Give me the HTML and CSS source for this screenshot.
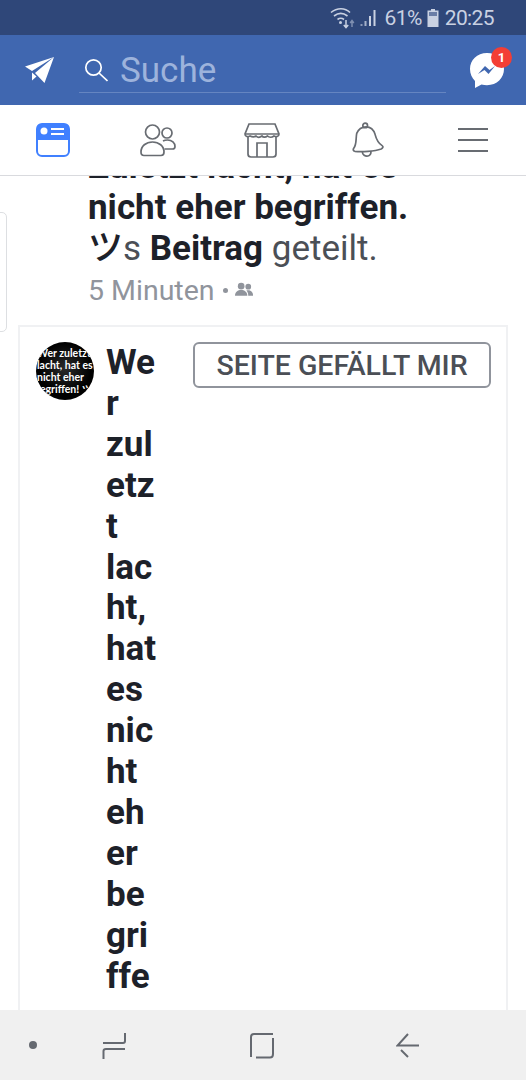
FILE: index.html
```html
<!DOCTYPE html>
<html lang="de">
<head>
<meta charset="utf-8">
<title>Facebook</title>
<link rel="stylesheet" href="styles.css">
</head>
<body>
<div class="phone">
  <div class="status">
    <svg class="st-wifi" width="26" height="24" viewBox="0 0 26 24" fill="none" stroke="#c9d1e2">
      <path d="M1 6.5C7 1.5 15 1.5 20 6.5" stroke-width="1.6"/>
      <path d="M4 10C8.5 6.5 13 6.5 17.5 10" stroke-width="1.6"/>
      <path d="M7.5 13.5C9.5 12 12 12 14 13.5" stroke-width="1.6"/>
      <circle cx="10.5" cy="16.5" r="1.5" fill="#c9d1e2" stroke="none"/>
      <path d="M16 14V21M13.8 19L16 21.5L18.2 19" stroke-width="1.5"/>
      <path d="M22 21V15M20.2 17L22 14.5L23.8 17" stroke="#7f8fb0" stroke-width="1.5"/>
    </svg>
    <svg class="st-signal" width="17" height="18" viewBox="0 0 16 18" fill="#c9d1e2">
      <rect x="0" y="15" width="2" height="2" fill="#8c9ab8"/><rect x="4" y="12" width="2" height="5" fill="#a5b1ca"/><rect x="8.5" y="7" width="2" height="10"/><rect x="13" y="1" width="2" height="16"/>
    </svg>
    <span class="st-pct">61%</span>
    <svg class="st-batt" width="12" height="18" viewBox="0 0 12 18"><path d="M4 0H8V1.5H11.5V18H.5V1.5H4Z" fill="#c9d1e2"/><rect x="2" y="3" width="8" height="4" fill="#6a7da6"/></svg>
    <span class="st-time">20:25</span>
  </div>

  <header class="topbar">
    <svg class="plane" width="30" height="26" viewBox="0 0 30 26" fill="#fff">
      <path d="M30 0L1 9.5L8 14L30 0ZM30 0L11 16L20.5 26L30 0ZM8 15.5V23.5L12.5 19.5L8 15.5Z"/>
    </svg>
    <div class="search">
      <svg class="search-icon" width="24" height="24" viewBox="0 0 24 24" fill="none" stroke="#fff" stroke-width="1.7"><circle cx="9.5" cy="9.5" r="7.7"/><path d="M15 15L23.5 23"/></svg>
      <span class="search-text">Suche</span>
    </div>
    <div class="msg">
      <svg width="36" height="38" viewBox="0 0 36 38"><path d="M18 2C8 2 1 9 1 18C1 23 3 27 6 30V37L12.5 33.5C14.5 34 16 34.2 18 34.2C28 34.2 35 27 35 18C35 9 28 2 18 2Z" fill="#fff"/><path d="M9 23L16 15L20.5 19L26 15L19.5 23L15.5 19Z" fill="#4067b0"/></svg>
      <span class="badge">1</span>
    </div>
  </header>

  <nav class="tabs">
    <div class="tab">
      <svg width="34" height="34" viewBox="0 0 34 34"><rect x="1" y="1" width="32" height="32" rx="5" fill="#fff" stroke="#4080ff" stroke-width="2"/><path d="M5 1H29A4 4 0 0 1 33 5V17H1V5A4 4 0 0 1 5 1Z" fill="#4080ff"/><circle cx="8" cy="8" r="3.5" fill="#fff"/><path d="M15 6H28M15 11H28" stroke="#fff" stroke-width="2"/></svg>
    </div>
    <div class="tab">
      <svg width="36" height="34" viewBox="0 0 36 34" fill="none" stroke="#686c72" stroke-width="1.7"><circle cx="12.5" cy="9" r="7"/><circle cx="27" cy="10" r="5"/><path d="M1 29C1 23 6 19 12.5 19C19 19 24 23 24 29C24 31.5 23 32.5 21 32.5H4C2 32.5 1 31.5 1 29Z"/><path d="M23 18C24.5 17.2 26 17 27.5 17C32 17 35 20 35 23.5C35 25 34 26 32.5 26H24.5"/></svg>
    </div>
    <div class="tab">
      <svg class="shop" width="36" height="35" viewBox="0 0 36 35" fill="none" stroke="#686c72" stroke-width="1.7"><path d="M5 1H31L35 11C35 14 32 14 30 13C28 14.5 25 14.5 23.5 13C21.5 14.5 19 14.5 18 13C16 14.5 13.5 14.5 12 13C10 14.5 8 14 6 13C4 14 1 14 1 11Z"/><path d="M1 11H35" stroke-width="1.5"/><path d="M4 14V31C4 33 5 34 7 34H29C31 34 32 33 32 31V14"/><path d="M13 34V20H23V34"/></svg>
    </div>
    <div class="tab">
      <svg width="32" height="36" viewBox="0 0 34 38" fill="none" stroke="#686c72" stroke-width="1.8"><circle cx="14" cy="3.5" r="2.5"/><path d="M5 12C7 7 11 5 15 5C20 5 23 8 24.5 13C26 19 29 23 32 25C33.5 26 33 27.5 31 28.5C24 31 10 32 3 31C1 30.5 1 29 2 27.5C5 24 4 17 5 12Z"/><path d="M11 31.5C11 35 14 36.5 17 36C19.5 35.5 20.5 33 20 30.5"/></svg>
    </div>
    <div class="tab">
      <svg width="32" height="26" viewBox="0 0 32 26" stroke="#686c72" stroke-width="2"><path d="M1 2H31M1 13H31M1 24H31"/></svg>
    </div>
  </nav>

  <main class="feed">
    <div class="peek"></div>
    <div class="story">
      <h2 class="title">Zuletzt lacht, hat es<br>nicht eher begriffen.</h2>
      <p class="shared"><b class="kana">ツ</b>s <b>Beitrag</b> geteilt.</p>
      <p class="meta">
        <span>5 Minuten</span><span class="sep"></span>
        <svg class="meta-icon" width="18" height="15" viewBox="0 0 19 15" fill="#90949c"><circle cx="6.5" cy="4" r="3.5"/><circle cx="14" cy="4.5" r="3"/><path d="M0 14C0 10 3 8 6.5 8C10 8 13 10 13 14Z"/><path d="M14 14C14 11 13 9.5 12 8.5C15.5 7.5 19 9.5 19 13V14Z"/></svg>
      </p>
    </div>
    <section class="card">
      <div class="avatar">
        <span>Wer zuletzt</span>
        <span>lacht, hat es</span>
        <span>nicht eher</span>
        <span class="av-last">begriffen! ツ</span>
      </div>
      <div class="name">Wer zuletzt lacht, hat es nicht eher begriffen.</div>
      <button class="like">SEITE GEFÄLLT MIR</button>
    </section>
  </main>

  <footer class="softkeys">
    <svg class="k-dot" width="10" height="10" viewBox="0 0 10 10"><circle cx="5" cy="5" r="4" fill="#656970"/></svg>
    <svg class="k-recent" width="24" height="28" viewBox="0 0 24 28" fill="none" stroke="#656970" stroke-width="2"><path d="M1 11H21C22.5 11 23 10 23 9V1"/><path d="M23 17H4C2 17 1.5 18 1.5 19V27"/></svg>
    <svg class="k-home" width="24" height="26" viewBox="0 0 24 26" fill="none" stroke="#656970" stroke-width="2"><path d="M1 24V4C1 2 2 1 4 1H23"/><path d="M23 5V21C23 23.5 22 24.5 20 24.5H6"/></svg>
    <svg class="k-back" width="24" height="26" viewBox="0 0 24 26" fill="none" stroke="#656970" stroke-width="2"><path d="M12 1L1.5 12.5H23"/><path d="M5 17L12 24"/></svg>
  </footer>
</div>
</body>
</html>
```
FILE: styles.css
```css
* { box-sizing: border-box; }
html, body { margin: 0; padding: 0; }
body { font-family: Roboto, "Noto Sans CJK JP", sans-serif; background: #fff; }
.phone { width: 526px; height: 1080px; display: flex; flex-direction: column; overflow: hidden; }

.status { height: 35px; flex: none; background: #2f4779; color: #c9d1e2; display: flex; align-items: center; justify-content: flex-end; padding-right: 32px; font-size: 21px; letter-spacing: -.6px; }
.st-signal { margin-left: 4px; margin-right: 8px; }
.st-batt { margin-left: 5px; margin-right: 6px; }

.topbar { height: 70px; flex: none; background: #4067b0; display: flex; align-items: center; padding-left: 24px; position: relative; }
.plane { flex: none; }
.search { align-self: flex-start; margin-top: 12px; margin-left: 25px; width: 367px; height: 46px; border-bottom: 1px solid #6585c1; display: flex; align-items: center; padding-left: 5px; }
.search-icon { margin-top: 1px; }
.search-text { margin-left: 12px; padding-top: 1px; font-size: 35px; color: #9db3dc; }
.msg { margin-left: 23px; width: 36px; height: 38px; position: relative; }
.msg svg { display: block; }
.badge { position: absolute; top: -4px; right: -7px; width: 21px; height: 21px; border-radius: 50%; background: #f33e35; color: #fff; font-size: 13px; font-weight: 700; display: flex; align-items: center; justify-content: center; }

.tabs { height: 71px; flex: none; background: #fff; border-bottom: 1px solid #d9dade; display: flex; position: relative; z-index: 1; }
.tab { flex: 1; display: flex; align-items: center; justify-content: center; }
.shop { margin-right: 2px; }

.feed { flex: 1; min-height: 0; overflow: hidden; position: relative; background: #fff; }
.peek { position: absolute; left: -8px; top: 36px; width: 15px; height: 120px; border: 1px solid #dddfe2; border-radius: 5px; }
.story { margin-top: -30px; padding-left: 88px; }
.title { margin: 0; font-size: 35px; line-height: 41px; font-weight: 700; color: #1d2129; white-space: nowrap; }
.shared { margin: 0; font-size: 35px; line-height: 41px; color: #4b4f56; }
.shared b { color: #1d2129; font-weight: 700; }
.shared .kana { font-weight: 500; }
.meta { margin: 0; height: 41px; padding-top: 2px; font-size: 28.5px; line-height: 39px; color: #90949c; display: flex; align-items: center; }
.sep { width: 5px; height: 5px; border-radius: 50%; background: #90949c; margin: 0 7px 0 8px; }
.meta-icon { margin-top: -3px; }

.card { margin: 15px 18px 0; min-height: 800px; border: 2px solid #f0f1f3; border-bottom: 0; padding: 15px 15px 0 16px; display: flex; align-items: flex-start; }
.avatar { flex: none; width: 58px; height: 58px; border-radius: 50%; overflow: hidden; background: radial-gradient(circle at 50% 45%, #2b2b2b 0, #000 60%); color: #fff; font-family: Lato, sans-serif; font-weight: 700; font-size: 10.5px; line-height: 12px; display: flex; flex-direction: column; align-items: flex-start; justify-content: center; padding-left: 1px; white-space: nowrap; }
.av-last { margin-left: -3px; }
.name { flex: none; width: 52px; margin-left: 12px; padding-top: 1px; font-size: 35px; line-height: 40.9px; font-weight: 700; color: #1d2129; overflow-wrap: break-word; }
.like { margin-left: auto; flex: none; width: 298px; height: 46px; background: #fff; border: 2px solid #90949c; border-radius: 6px; font-family: Roboto, sans-serif; font-size: 28.5px; font-weight: 500; color: #4b4f56; padding: 0; white-space: nowrap; }

.softkeys { height: 70px; flex: none; background: #f0f0f0; display: flex; align-items: center; position: relative; z-index: 1; padding-left: 28px; }
.k-recent { margin-left: 64px; margin-top: 2px; }
.k-home { margin-left: 124px; margin-top: 2px; }
.k-back { margin-left: 122px; margin-top: 2px; }
```
